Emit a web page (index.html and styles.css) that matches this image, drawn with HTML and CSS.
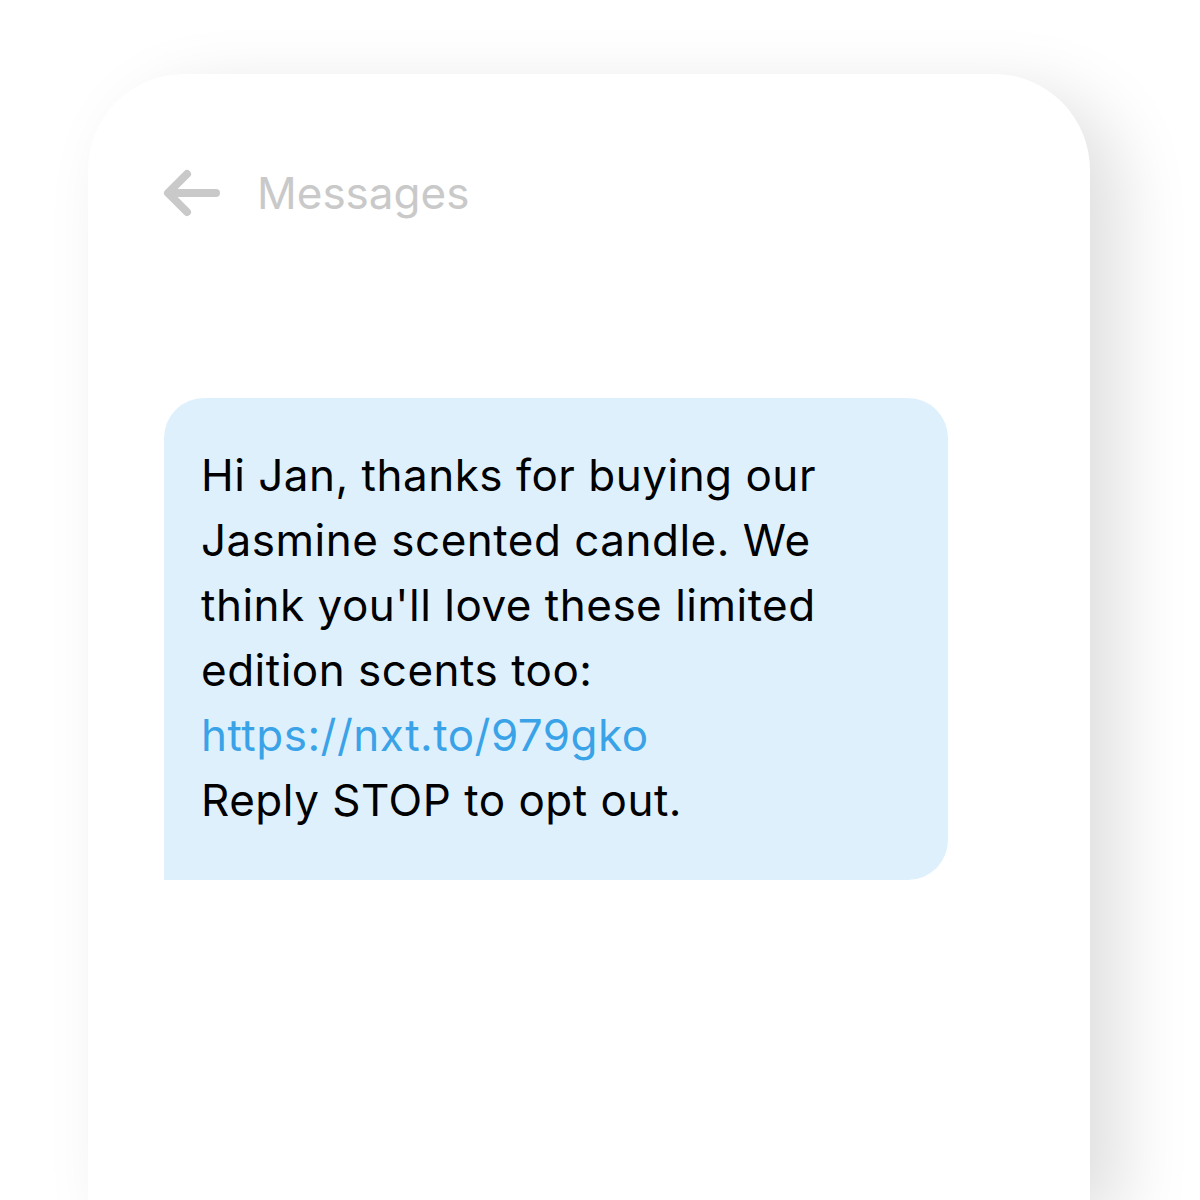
FILE: index.html
```html
<!DOCTYPE html>
<html lang="en">
<head>
    <meta charset="UTF-8">
    <meta name="viewport" content="width=device-width, initial-scale=1.0">
    <title>Messages</title>
    <link rel="stylesheet" href="styles.css">
</head>
<body>
    <div class="phone">
        <div class="header">
            <svg class="back" width="60" height="52" viewBox="0 0 60 52">
                <path d="M54 26 H7 M25 7 L6 26 L25 45" fill="none" stroke="#c9c9c9" stroke-width="8" stroke-linecap="round" stroke-linejoin="round"/>
            </svg>
            <span class="title">Messages</span>
        </div>
        <div class="bubble">
            <p>Hi Jan, thanks for buying our Jasmine scented candle. We think you'll love these limited edition scents too:<br>
            <a href="#">https://nxt.to/979gko</a><br>
            Reply STOP to opt out.</p>
        </div>
    </div>
</body>
</html>
```

FILE: styles.css
```css
html, body {
    margin: 0;
    height: 100%;
    overflow: hidden;
    background: #fff;
}
body {
    font-family: Inter, "Noto Sans", sans-serif;
}
.phone {
    margin: 74px 0 0 88px;
    width: 1002px;
    height: 1126px;
    background: #fff;
    border-radius: 96px 96px 0 0;
    box-shadow: 30px 20px 70px rgba(0, 0, 0, 0.13);
    padding: 0 0 0 74px;
    box-sizing: border-box;
}
.header {
    display: flex;
    align-items: center;
    padding-top: 93px;
    height: 52px;
}
.back {
    display: block;
}
.title {
    margin-left: 35px;
    font-size: 44px;
    color: #c9c9c9;
}
.bubble {
    margin-top: 179px;
    margin-left: 2px;
    width: 784px;
    box-sizing: border-box;
    padding: 45px 90px 47px 37px;
    background: #dff0fd;
    border-radius: 40px 40px 40px 0;
}
.bubble p {
    margin: 0;
    font-size: 44px;
    line-height: 65px;
    letter-spacing: 0.5px;
    color: #000;
}
.bubble a {
    color: #3aa3e8;
    text-decoration: none;
}
```
